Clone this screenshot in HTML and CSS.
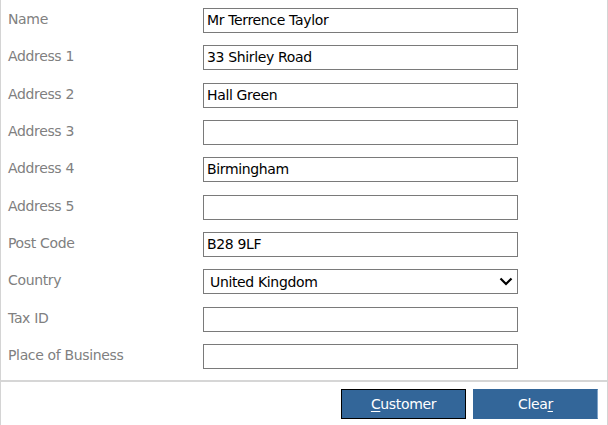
FILE: index.html
```html
<!DOCTYPE html>
<html>
<head>
<meta charset="utf-8">
<link rel="stylesheet" href="styles.css">
</head>
<body>
<div class="panel">
  <form class="form">
    <label class="lbl">Name</label>
    <div class="field">Mr Terrence Taylor</div>
    <label class="lbl">Address 1</label>
    <div class="field">33 Shirley Road</div>
    <label class="lbl">Address 2</label>
    <div class="field">Hall Green</div>
    <label class="lbl">Address 3</label>
    <div class="field"></div>
    <label class="lbl">Address 4</label>
    <div class="field">Birmingham</div>
    <label class="lbl">Address 5</label>
    <div class="field"></div>
    <label class="lbl">Post Code</label>
    <div class="field">B28 9LF</div>
    <label class="lbl">Country</label>
    <div class="field select">
      <span>United Kingdom</span>
      <svg class="chev" width="14" height="9" viewBox="0 0 14 9"><path d="M1.5 1.5 L7 7 L12.5 1.5" fill="none" stroke="#000" stroke-width="2.2"/></svg>
    </div>
    <label class="lbl">Tax ID</label>
    <div class="field"></div>
    <label class="lbl">Place of Business</label>
    <div class="field"></div>
  </form>
  <div class="footer">
    <button class="btn focused" type="button"><u>C</u>ustomer</button>
    <button class="btn" type="button">Clea<u>r</u></button>
  </div>
</div>
</body>
</html>
```

FILE: styles.css
```css
html, body {
  margin: 0;
  padding: 0;
  background: #fff;
}
body {
  font-family: "DejaVu Sans", "Liberation Sans", sans-serif;
  font-size: 13px;
}
.panel {
  width: 608px;
  height: 425px;
  box-sizing: border-box;
  border-left: 1px solid #d4d4d4;
  border-right: 1px solid #d4d4d4;
  display: flex;
  flex-direction: column;
}
.form {
  margin: 0;
  padding: 8px 0 0 7px;
  height: 380px;
  box-sizing: border-box;
  display: grid;
  grid-template-columns: 195px 315px;
  grid-auto-rows: 25px;
  row-gap: 12.33px;
  align-content: start;
}
.lbl {
  color: #808080;
  font-size: 14px;
  letter-spacing: -0.35px;
  align-self: start;
  line-height: 20px;
  margin-top: 1px;
}
.field {
  box-sizing: border-box;
  height: 25px;
  border: 1px solid #7a7a7a;
  background: #fff;
  color: #000;
  padding: 0 0 0 3px;
  line-height: 23px;
  font-size: 14px;
  letter-spacing: -0.35px;
  white-space: nowrap;
  overflow: hidden;
}
.select {
  display: flex;
  align-items: center;
  justify-content: space-between;
  padding: 0 4px 0 6px;
  height: 25px;
}
.select span {
  margin-top: 1px;
}
.chev {
  display: block;
  margin-top: -1px;
}
.footer {
  border-top: 2px solid #d6d6d6;
  flex: 1;
  display: flex;
  justify-content: flex-end;
  align-items: flex-start;
  gap: 7px;
  padding: 7px 9px 0 0;
}
.btn {
  width: 125px;
  height: 30px;
  box-sizing: border-box;
  background: #336699;
  color: #fff;
  border: 1px solid #336699;
  border-right-color: #7fa3c8;
  font-family: "DejaVu Sans", "Liberation Sans", sans-serif;
  font-size: 14px;
  letter-spacing: -0.35px;
  padding: 0;
  margin: 0;
}
.btn.focused {
  border: 1px solid #000;
}
.btn u {
  text-underline-offset: 2px;
}
```
